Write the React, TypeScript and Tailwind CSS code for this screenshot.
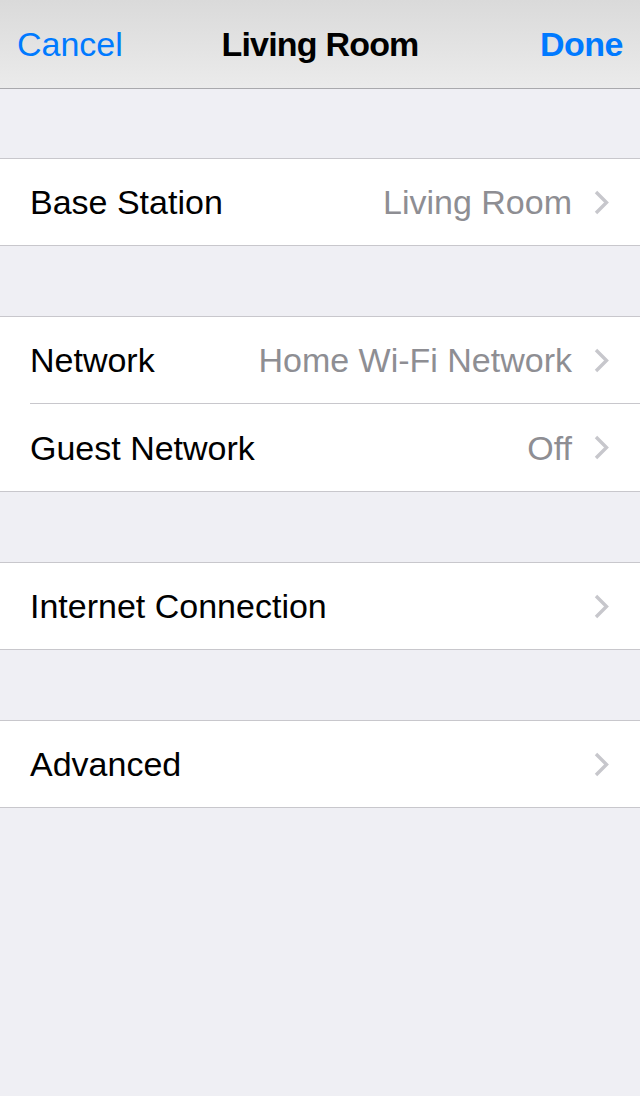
import React from "react";

type Row = { label: string; value?: string };

const GROUPS: Row[][] = [
  [{ label: "Base Station", value: "Living Room" }],
  [
    { label: "Network", value: "Home Wi-Fi Network" },
    { label: "Guest Network", value: "Off" },
  ],
  [{ label: "Internet Connection" }],
  [{ label: "Advanced" }],
];

function Chevron() {
  return (
    <svg width="15" height="25" viewBox="0 0 15 25" className="shrink-0">
      <path d="M2 2 L12.5 12.5 L2 23" fill="none" stroke="#c7c7cc" strokeWidth="3.4" strokeLinecap="butt" strokeLinejoin="miter" />
    </svg>
  );
}

export default function App() {
  return (
    <div
      className="w-[640px] h-[1096px] bg-[#efeff4] overflow-hidden"
      style={{ fontFamily: '"Liberation Sans", Arial, sans-serif' }}
    >
      <header className="h-[89px] flex items-center justify-between px-[17px] border-b border-[#a9a9ad] bg-gradient-to-b from-[#dadada] to-[#ebebeb] relative">
        <span className="text-[34px] text-[#007aff] leading-none">Cancel</span>
        <span className="absolute left-0 right-0 text-center text-[34px] font-bold tracking-[-0.8px] text-black leading-none pointer-events-none">
          Living Room
        </span>
        <span className="text-[34px] font-bold tracking-[-0.5px] text-[#007aff] leading-none">Done</span>
      </header>

      {GROUPS.map((group, gi) => (
        <div
          key={gi}
          className={(gi === 0 ? "mt-[69px]" : "mt-[70px]") + " bg-white border-y border-[#c8c7cc]"}
        >
          {group.map((row, ri) => (
            <div key={row.label} className="pl-[30px]">
              <div
                className={
                  "flex items-center pr-[31px] " +
                  (ri > 0 ? "border-t border-[#c8c7cc] h-[88px]" : "h-[86px]")
                }
              >
                <span className="flex-1 text-[34px] text-black leading-none">{row.label}</span>
                {row.value && (
                  <span className="text-[34px] text-[#8e8e93] leading-none mr-[22px]">{row.value}</span>
                )}
                <Chevron />
              </div>
            </div>
          ))}
        </div>
      ))}
    </div>
  );
}
